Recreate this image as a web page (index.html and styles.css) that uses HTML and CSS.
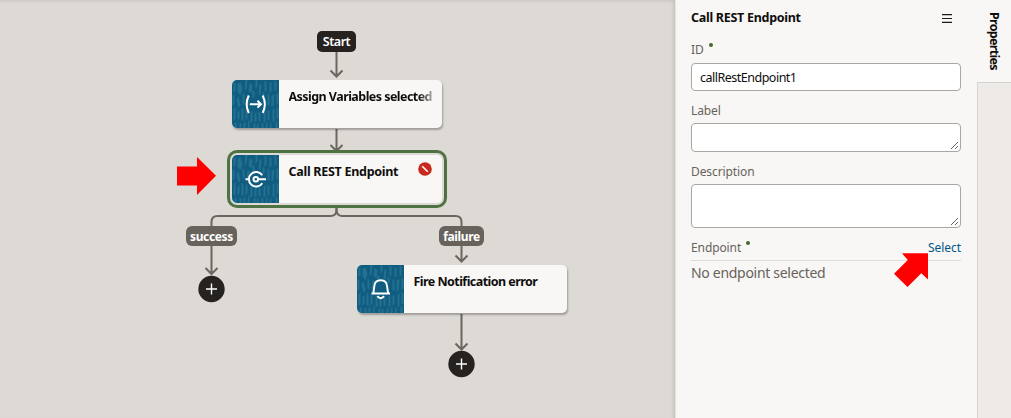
FILE: index.html
```html
<!DOCTYPE html>
<html lang="en">
<head>
<meta charset="utf-8">
<title>Action Chain</title>
<link rel="stylesheet" href="styles.css">
</head>
<body>
<svg class="defs" width="0" height="0" aria-hidden="true">
  <symbol id="texture" viewBox="0 0 48 48">
    <rect width="48" height="48" fill="#115d82"/>
    <g fill="#23708f">
      <path d="M2 2l2 1v8l-2 1zM6 4l3-2 2 7-2 6-3-3zM14 0h2l-1 9-2 1zM18 3l3 2-1 8-3-2zM24 0h2v6l-2 3zM28 4l2 1-1 10-2-1zM33 1h2v9l-2 2zM38 3l2-1v9l-2 2zM43 0l2 2v8l-2 1z"/>
      <path d="M1 16l2-2v10l-2 2zM5 20l2-4 2 9-2 3zM11 13l2 2v10l-2-2zM16 15l2 1-1 10-2-2zM36 14l2 1v10l-2 1zM40 16l3-2-1 11-2 2zM45 13l2 1v9l-2 2zM21 10l2 1v6l-2 1zM31 12l2 1v5l-2 1z"/>
      <path d="M2 29l2-2v12l-2 2zM6 32l2-2v8l-2 3zM10 28l2 1v12l-2-1zM14 31l2-2v9l-2 3zM19 32l2-1v10l-2 2zM23 34l2-2v9l-2 1zM27 31l2 2v9l-2-2zM32 32l2-2v11l-2 2zM36 30l2 1v8l-2 2zM41 30l2-2v13l-2 1zM45 27l2 2v9l-2 1z"/>
      <path d="M3 43l2-1v6H3zM8 42l2 2v4H8zM12 43l2-1v6h-2zM17 40l1 2v6h-2zM22 44l2-1v5h-2zM26 43l1 1v4h-2zM30 43l2 1v4h-2zM35 41l1 2v5h-2zM39 42l1 1v5h-2zM44 41l2 2v5h-2z"/>
    </g>
  </symbol>
</svg>
<div class="app">
  <main class="canvas">
    <svg class="links" width="675" height="418" viewBox="0 0 675 418">
      <g fill="none" stroke="#6b665f" stroke-width="2">
        <path d="M336.500 50V76M330.500 70.500L336.500 76.500L342.500 70.500"/>
        <path d="M336.500 129V151M330.500 145L336.500 151L342.500 145"/>
        <path d="M336.500 207V210Q336.500 216 330.500 216H217.500Q211.500 216 211.500 222V273M205.500 268L211.500 274L217.500 268"/>
        <path d="M336.500 207V210Q336.500 216 342.500 216H455.500Q461.500 216 461.500 222V261M455.500 255.500L461.500 261.500L467.500 255.500"/>
        <path d="M461.500 314V349M455.500 343.500L461.500 349.500L467.500 343.500"/>
      </g>
    </svg>
    <div class="tag tag-start"><span>Start</span></div>
    <div class="node node-assign">
      <svg class="node-icon" width="47" height="48" viewBox="0.500 0 47 48"><use href="#texture" width="48" height="48"/><g fill="none" stroke="#fff" stroke-width="2"><path d="M17.300 15.500Q13 24.200 17.300 33M31.200 15.500Q35.500 24.200 31.200 33M18.300 24.200H29.500M26 20.800L29.400 24.200L26 27.600"/></g></svg>
      <div class="node-title fade">Assign Variables selected</div>
    </div>
    <div class="node node-rest">
      <svg class="node-icon" width="47" height="48" viewBox="0.500 0 47 48"><use href="#texture" width="48" height="48"/><g fill="none" stroke="#fff" stroke-width="2"><path d="M30.800 20.300A7.300 7.300 0 1 0 30.800 28.300M14 24.200H17M27 24.200H34.500"/><circle cx="24.300" cy="24.200" r="2.300"/></g></svg>
      <div class="node-title">Call REST Endpoint</div>
      <svg class="node-error" width="14" height="14" viewBox="0 0 14 14"><circle cx="7" cy="7" r="6.800" fill="#c7291e"/><path d="M4.200 4.200L9.800 9.800" stroke="#fff" stroke-width="1.600"/></svg>
    </div>
    <div class="tag tag-success"><span>success</span></div>
    <div class="tag tag-failure"><span>failure</span></div>
    <div class="node node-notify">
      <svg class="node-icon" width="47" height="48" viewBox="0.500 0 47 48"><use href="#texture" width="48" height="48"/><g fill="none" stroke="#fff" stroke-width="1.900"><path d="M15 28.500H33.500M16.800 28.500L17.800 21.500C18 17.300 20.300 15.200 24.200 15.200C28 15.200 30.300 17.300 30.600 21.500L31.600 28.500"/><path d="M20.800 31.200Q24.200 35.300 27.600 31.200"/></g></svg>
      <div class="node-title">Fire Notification error</div>
    </div>
    <svg class="add add-success" width="27" height="28" viewBox="0 0 27 28"><circle cx="13.500" cy="14" r="13.200" fill="#26221f"/><path d="M8 14H19M13.500 8.500V19.500" stroke="#fff" stroke-width="1.400"/></svg>
    <svg class="add add-failure" width="27" height="28" viewBox="0 0 27 28"><circle cx="13.500" cy="14" r="13.200" fill="#26221f"/><path d="M8 14H19M13.500 8.500V19.500" stroke="#fff" stroke-width="1.400"/></svg>
    <svg class="pointer pointer-node" width="40" height="40" viewBox="0 0 40 40"><path d="M0 9.500H20V0L39 18.800L20 38V28.500H0Z" fill="#f00"/></svg>
  </main>
  <aside class="panel">
    <header class="panel-head">
      <h1 class="panel-title">Call REST Endpoint</h1>
      <svg class="menu" width="10" height="9" viewBox="0 0 10 9"><path d="M0 .6H10M0 4.500H10M0 8.400H10" stroke="#1d1a18" stroke-width="1.200"/></svg>
    </header>
    <label class="label label-id"><span>ID</span><i class="required"></i></label>
    <div class="field field-id"><span>callRestEndpoint1</span></div>
    <label class="label label-label"><span>Label</span></label>
    <div class="field field-label"><svg class="grip" width="9" height="9" viewBox="0 0 9 9"><path d="M1 8L8 1M5 8L8 5" stroke="#555" stroke-width=".9"/></svg></div>
    <label class="label label-desc"><span>Description</span></label>
    <div class="field field-desc"><svg class="grip" width="9" height="9" viewBox="0 0 9 9"><path d="M1 8L8 1M5 8L8 5" stroke="#555" stroke-width=".9"/></svg></div>
    <div class="endpoint-row">
      <label class="label"><span>Endpoint</span><i class="required"></i></label>
      <a class="select">Select</a>
    </div>
    <p class="empty">No endpoint selected</p>
    <svg class="pointer pointer-select" width="35" height="35" viewBox="0 0 35 35"><path d="M8 .3H34V26.500L27.300 20.300L13.500 34L0 20.800L13.800 7Z" fill="#f00"/></svg>
  </aside>
  <nav class="rail"><div class="tab"><span>Properties</span></div></nav>
</div>
</body>
</html>
```
FILE: styles.css
```css
* { box-sizing: border-box; }
body { margin: 0; font-family: "Noto Sans", sans-serif; font-size: 12.5px; color: #0f0e0d; }
.defs { position: absolute; }
.app { display: flex; width: 1011px; height: 418px; overflow: hidden; }
.canvas { position: relative; width: 675px; height: 418px; background: #dddad5; box-shadow: inset -5px 0 4px -4px #bdb9b3, inset 0 4px 4px -4px #bdb9b3; }
.links { position: absolute; left: 0; top: 0; }
.tag { position: absolute; display: flex; align-items: center; justify-content: center; height: 20px; border-radius: 6px; background: #67625b; color: #fff; font-weight: 700; font-size: 12px; letter-spacing: -.35px; white-space: nowrap; }
.tag-start { left: 317px; top: 31px; width: 39px; height: 21px; border-radius: 5px; background: #26221f; font-weight: 600; font-size: 12.5px; letter-spacing: -.45px; }
.tag-success { left: 186px; top: 226px; width: 51px; }
.tag-failure { left: 439px; top: 226px; width: 45px; }
.node { position: absolute; display: flex; width: 209.5px; height: 48px; background: #f8f7f5; border-radius: 5px; box-shadow: 1px 2px 2px rgba(0, 0, 0, .28); }
.node-icon { flex: none; border-radius: 5px 0 0 5px; }
.node-title { width: 147px; margin-left: 9.5px; padding-top: 8px; line-height: 18px; font-weight: 700; letter-spacing: -.55px; white-space: nowrap; }
.node-rest .node-title { letter-spacing: -.28px; }
.fade { -webkit-mask-image: linear-gradient(90deg, #000 88%, rgba(0, 0, 0, .15)); mask-image: linear-gradient(90deg, #000 88%, rgba(0, 0, 0, .15)); }
.node-assign { left: 232px; top: 80px; }
.node-rest { left: 232px; top: 155px; box-shadow: 0 0 0 2px #dddad5, 0 0 0 5px #4f7242; }
.node-notify { left: 357px; top: 265px; }
.node-error { position: absolute; right: 10px; top: 7px; }
.add { position: absolute; }
.add-success { left: 198px; top: 275px; }
.add-failure { left: 448px; top: 350px; }
.pointer { position: absolute; }
.pointer-node { left: 177px; top: 157px; }
.panel { position: relative; width: 302px; padding: 9px 16px 0 15px; background: #f8f7f5; border-left: 1px solid #e5e3df; }
.panel-head { display: flex; align-items: center; justify-content: space-between; height: 18px; padding-right: 9px; }
.panel-title { margin: 0; font-size: 12.5px; line-height: 18px; letter-spacing: -.28px; white-space: nowrap; }
.label { display: flex; height: 18px; line-height: 18px; color: #67625b; font-size: 12px; letter-spacing: -.1px; }
.label-id { margin-top: 14px; }
.label-label { margin-top: 11px; }
.label-desc { margin-top: 11px; }
.required { width: 4px; height: 4px; margin: 2px 0 0 5px; border-radius: 50%; background: #436b2f; }
.field { display: flex; width: 270px; background: #fff; border: 1px solid #aaa7a3; border-radius: 4px; }
.field-id { height: 28px; margin-top: 4px; padding-left: 8px; align-items: center; letter-spacing: -.5px; }
.field-label, .field-desc { align-items: flex-end; justify-content: flex-end; padding: 1px; }
.field-label { height: 29px; margin-top: 3px; }
.field-desc { height: 44px; margin-top: 3px; }
.endpoint-row { display: flex; justify-content: space-between; width: 270px; height: 22px; margin-top: 11px; border-bottom: 1px solid #dfdcd8; }
.select { color: #00588a; font-size: 12px; line-height: 18px; letter-spacing: -.05px; }
.empty { margin: 2px 0 0; color: #67625b; font-size: 14px; line-height: 20px; letter-spacing: -.3px; white-space: nowrap; }
.pointer-select { left: 218px; top: 253px; }
.rail { width: 34px; height: 418px; background: #eeeae8; border-left: 1px solid #d5d2ce; }
.tab { display: flex; width: 34px; height: 83px; margin-left: -1px; padding-top: 12px; background: #f8f7f5; border-bottom: 1px solid #d5d2ce; }
.tab span { margin-left: 8px; writing-mode: vertical-rl; font-weight: 700; line-height: 18px; letter-spacing: -.7px; }
```
